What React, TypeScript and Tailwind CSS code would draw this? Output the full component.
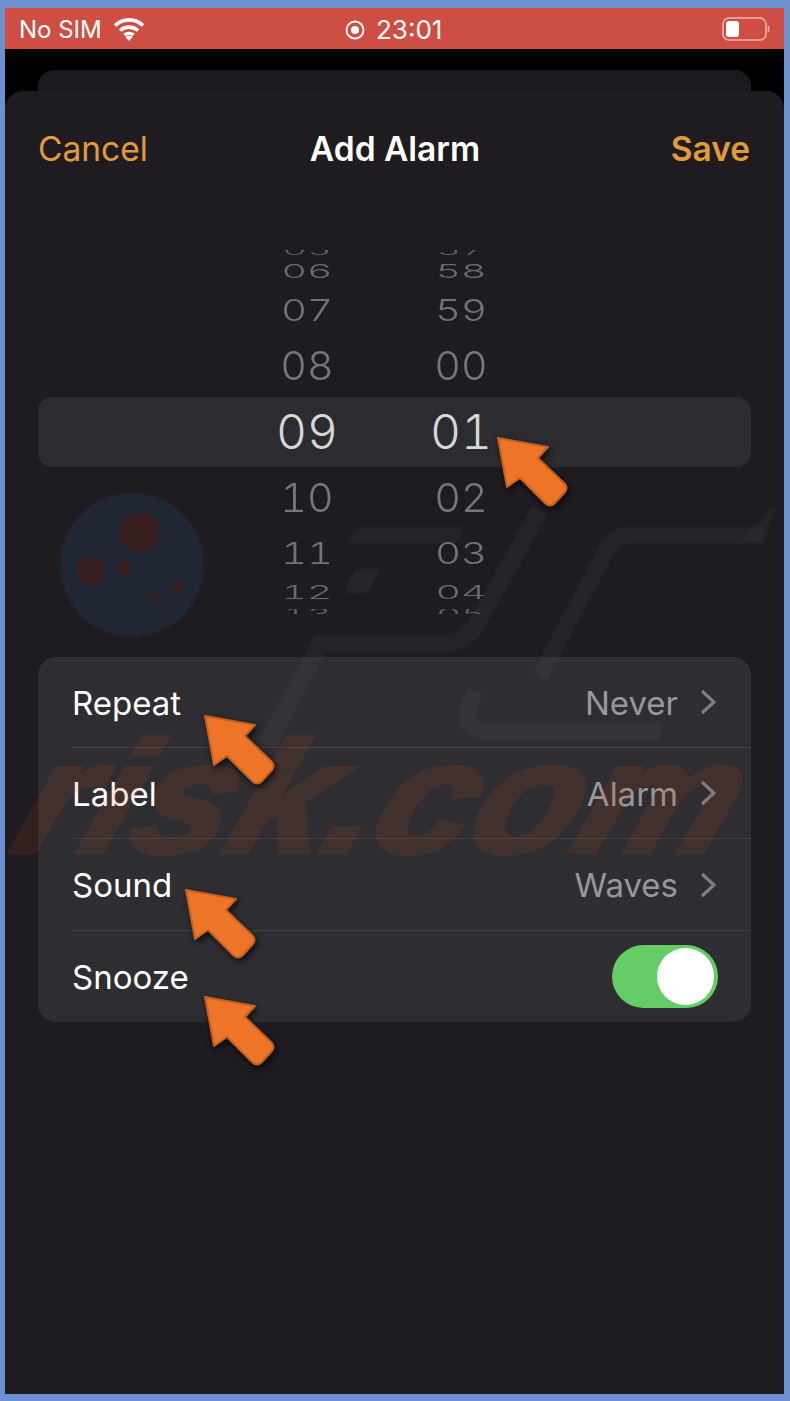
const wheelRows = [
  { hour: '05', minute: '57', rowClass: 'h-[6px] items-start', textClass: 'leading-[0px] scale-x-[.8] scale-y-[.3] text-[#5f5f61]' },
  { hour: '06', minute: '58', rowClass: 'h-[29px] items-center', textClass: 'leading-none scale-x-[.82] scale-y-[.4] text-[#6a6a6c]' },
  { hour: '07', minute: '59', rowClass: 'h-[50px] items-center', textClass: 'leading-none scale-x-[.84] scale-y-[.63] text-[#737375]' },
  { hour: '08', minute: '00', rowClass: 'h-[62px] items-center', textClass: 'leading-none scale-x-[.86] scale-y-[.83] text-[#777779]' },
  { hour: '09', minute: '01', rowClass: 'h-[70px] items-center rounded-[14px] bg-[#2c2b30]', textClass: 'leading-none text-[#d6d6d8]' },
  { hour: '10', minute: '02', rowClass: 'h-[62px] items-center', textClass: 'leading-none scale-x-[.86] scale-y-[.83] text-[#777779]' },
  { hour: '11', minute: '03', rowClass: 'h-[48px] items-center', textClass: 'leading-none scale-x-[.84] scale-y-[.63] text-[#737375]' },
  { hour: '12', minute: '04', rowClass: 'h-[32px] items-center', textClass: 'leading-none scale-x-[.82] scale-y-[.38] text-[#6a6a6c]' },
  { hour: '13', minute: '05', rowClass: 'h-[5px] items-end', textClass: 'leading-[0px] scale-x-[.8] scale-y-[.3] text-[#5f5f61]' },
];

const settings = [
  { label: 'Repeat', value: 'Never', rowClass: 'h-[91px]' },
  { label: 'Label', value: 'Alarm', rowClass: 'h-[91px]' },
  { label: 'Sound', value: 'Waves', rowClass: 'h-[92px]' },
];

function WifiIcon() {
  return (
    <svg width="32" height="24" viewBox="0 0 32 24" fill="none" stroke="white" strokeWidth="3.6">
      <path d="M2 8.5C10 1 22 1 30 8.5" />
      <path d="M7 13.5C12 9 20 9 25 13.5" />
      <path d="M11.5 18C14 16 18 16 20.5 18" />
      <path d="M16 24L12.5 20Q16 17.5 19.5 20Z" fill="white" stroke="none" />
    </svg>
  );
}

function BatteryIcon() {
  return (
    <svg width="48" height="24" viewBox="0 0 48 24" fill="none">
      <rect x="1" y="1" width="43" height="22" rx="6" stroke="#eeb4ae" strokeWidth="1.6" />
      <rect x="4" y="4" width="13" height="16" rx="3" fill="white" />
      <path d="M46.5 9V15" stroke="#eeb4ae" strokeWidth="1.6" />
    </svg>
  );
}

function Chevron() {
  return (
    <svg width="16" height="26" viewBox="0 0 16 26" fill="none" stroke="#7f7e83" strokeWidth="3.2">
      <path d="M2 2L14 13L2 24" />
    </svg>
  );
}

function Arrow({ className }: { className: string }) {
  return (
    <svg
      width="76"
      height="76"
      viewBox="0 0 76 76"
      className={`absolute drop-shadow-[2px_3px_3px_rgba(0,0,0,0.7)] ${className}`}
    >
      <path
        d="M1 1L51 10L41 21L68 47Q71 51 68 55L58 66Q53 71 48 66L23 41L10 50Z"
        fill="#ee7428"
        stroke="#c4601f"
        strokeWidth="2"
        strokeLinejoin="round"
      />
    </svg>
  );
}

// site watermark that sits over the sheet
function Watermark() {
  return (
    <div className="absolute inset-0 overflow-hidden pointer-events-none">
      <svg width="779" height="1303" viewBox="0 0 779 1303" className="absolute left-0 top-0 blur-[1px]">
        <ellipse cx="127" cy="474" rx="72" ry="72" fill="#212634" />
        <ellipse cx="135" cy="441" rx="20" ry="20" fill="#3a1f20" />
        <ellipse cx="86" cy="480" rx="14" ry="14" fill="#3a1f20" />
        <circle cx="119" cy="477" r="7" fill="#3a1f20" />
        <circle cx="172" cy="495" r="6" fill="#3a1f20" />
        <circle cx="149" cy="506" r="4" fill="#3a1f20" />
        <g fill="none" stroke="#ffffff" strokeOpacity="0.03">
          <path strokeWidth="18" d="M535 419L473 531Q463 553 435 553H315L262 654" />
          <path strokeWidth="17" d="M758 444H625Q607 444 598 465L535 586" />
          <path strokeWidth="17" d="M656 640H485Q460 640 462 620L470 600" />
        </g>
        <path d="M355 436H460L452 452H340Z" fill="#ffffff" fillOpacity="0.03" />
        <path d="M349 479H375L362 502H340Z" fill="#ffffff" fillOpacity="0.045" />
        <path d="M772 412L758 452H735Z" fill="#ffffff" fillOpacity="0.03" />
      </svg>
      <span className="absolute left-[-12px] top-[611px] origin-bottom-left scale-x-[1.1] skew-x-[-18deg] font-['Liberation_Sans',sans-serif] text-[158px] leading-[190px] font-bold italic whitespace-nowrap text-[#d04a10] opacity-[.12] [-webkit-text-stroke:5px_#d04a10]">
        risk.com
      </span>
    </div>
  );
}

export default function App() {
  return (
    <div className="relative flex h-[1401px] w-[790px] flex-col overflow-hidden bg-[#6c90d0] pt-[8px] pr-[6px] pb-[7px] pl-[5px] font-['Inter',sans-serif]">
      <div className="flex h-[41px] shrink-0 items-center bg-[#cf4e43] pr-[14px] pl-[14px] text-[24px] text-white">
        <span className="mt-[2px] w-[94px]">No SIM</span>
        <WifiIcon />
        <div className="ml-[200px] flex items-center gap-[11px]">
          <svg width="20" height="20" viewBox="0 0 20 20" fill="none" className="mt-[2px]">
            <circle cx="10" cy="10" r="8.5" stroke="white" strokeWidth="1.8" />
            <circle cx="10" cy="10" r="4" fill="white" />
          </svg>
          <span className="mt-[2px] text-[26px]">23:01</span>
        </div>
        <div className="ml-auto">
          <BatteryIcon />
        </div>
      </div>

      <div className="flex min-h-0 flex-1 flex-col bg-black">
        <div className="mx-[33px] mt-[21px] h-[21px] shrink-0 rounded-t-[16px] bg-[#1a191d]" />

        <div className="relative flex flex-1 flex-col overflow-hidden rounded-t-[18px] bg-[#1e1c21]">
          <div className="flex h-[116px] shrink-0 items-center justify-between pr-[34px] pl-[33px] text-[33.5px]">
            <span className="w-[120px] text-[#e09c3a]">Cancel</span>
            <span className="ml-[2px] font-semibold text-white">Add Alarm</span>
            <span className="w-[120px] text-right font-semibold text-[#e09c3a]">Save</span>
          </div>

          <div className="mx-[33px] mt-[43px] flex flex-col">
            {wheelRows.map((row) => (
              <div key={row.hour} className={`flex overflow-hidden pl-[209px] ${row.rowClass}`}>
                <div className="flex w-[120px] justify-center">
                  <span className={`inline-block text-[48px] font-light tabular-nums ${row.textClass}`}>{row.hour}</span>
                </div>
                <div className="ml-[34px] flex w-[120px] justify-center">
                  <span className={`inline-block text-[48px] font-light tabular-nums ${row.textClass}`}>{row.minute}</span>
                </div>
              </div>
            ))}
          </div>

          <div className="mx-[33px] mt-[43px] flex flex-col rounded-[18px] bg-[#2e2d32] pl-[34px] text-[33px]">
            {settings.map((item) => (
              <div key={item.label} className={`flex items-center justify-between border-b border-[#414044] pr-[35px] text-white ${item.rowClass}`}>
                <span className="mt-[3px]">{item.label}</span>
                <div className="flex items-center gap-[22px] text-[#98979c]">
                  <span className="mt-[3px]">{item.value}</span>
                  <Chevron />
                </div>
              </div>
            ))}
            <div className="flex h-[91px] items-center justify-between pr-[33px] text-white">
              <span className="mt-[3px]">Snooze</span>
              <div className="flex h-[63px] w-[106px] items-center justify-end rounded-full bg-[#66cc66] pr-[4px]">
                <div className="h-[57px] w-[57px] rounded-full bg-white" />
              </div>
            </div>
          </div>

          <Watermark />
        </div>
      </div>

      <Arrow className="left-[497px] top-[437px]" />
      <Arrow className="left-[204px] top-[715px]" />
      <Arrow className="left-[185px] top-[889px]" />
      <Arrow className="left-[204px] top-[996px]" />
    </div>
  );
}
